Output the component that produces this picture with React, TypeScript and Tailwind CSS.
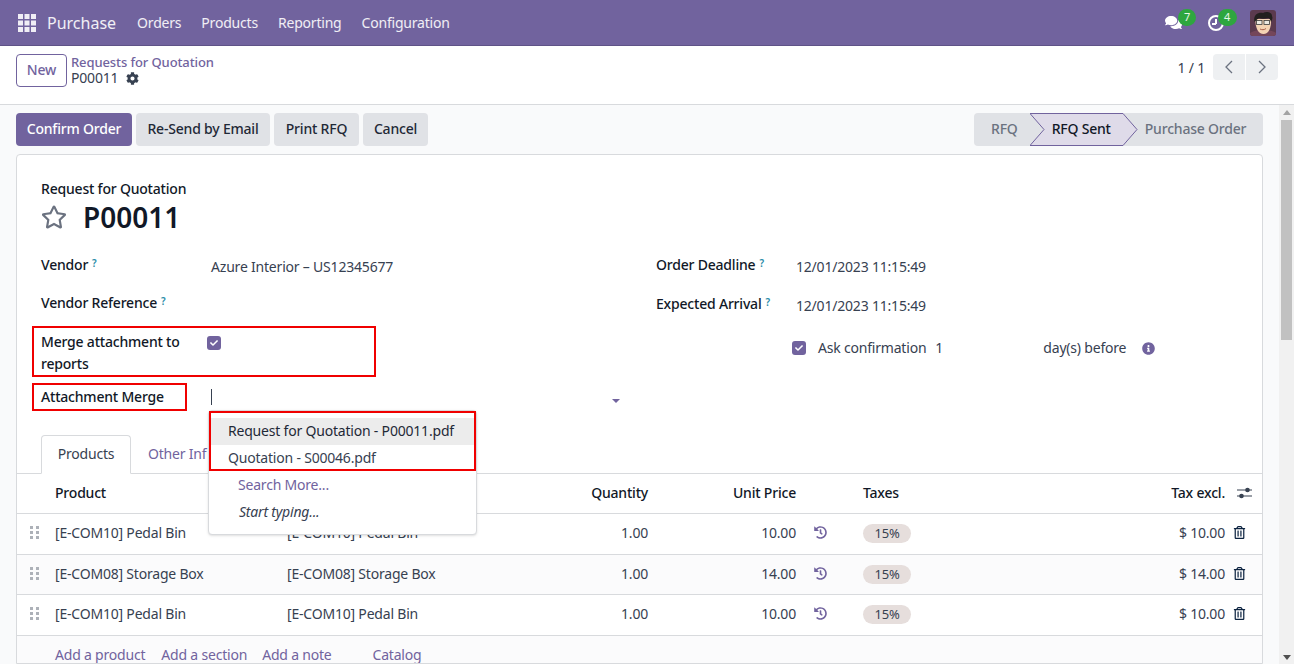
import React from "react";
import { FaCog, FaRegStar, FaHistory, FaInfoCircle, FaRegTrashAlt, FaComments, FaCheck } from "react-icons/fa";

const Grid = () => (
  <svg width="18" height="18" viewBox="0 0 18 18" fill="#f0eef5">
    {[0, 6.5, 13].map((y) => [0, 6.5, 13].map((x) => <rect key={`${x}-${y}`} x={x} y={y} width="5" height="5" />))}
  </svg>
);

const Avatar = () => (
  <svg width="26" height="26" viewBox="0 0 26 26" className="rounded-[3px]">
    <rect width="26" height="26" fill="#5b3a4e" />
    <path d="M0 26v-3c3-2 7-3 13-3s10 1 13 3v3z" fill="#74465a" />
    <path d="M5.500 9c-.5 9 3 15 8 15s8-6 7.500-15z" fill="#f4d3b4" />
    <path d="M4.500 12C3 6 7 2 13 3c3-2 9-1 9 3 1 2 0 4-1 6-.5-2-1-3-2.500-4-4 1-7 1-9.500 0-1.500 1-3 2.500-4.500 4z" fill="#23201f" />
    <rect x="6.500" y="10.500" width="5.500" height="4" fill="#ece9e2" stroke="#3a3a3a" strokeWidth="0.800" />
    <rect x="14" y="10.500" width="5.500" height="4" fill="#ece9e2" stroke="#3a3a3a" strokeWidth="0.800" />
    <path d="M10 19c1.500 1 4.500 1 6-.500" stroke="#a0523f" strokeWidth="0.900" fill="none" />
  </svg>
);

const Sliders = () => (
  <svg width="15" height="12" viewBox="0 0 15 12" fill="#374151">
    <rect x="0" y="2.500" width="15" height="1" />
    <circle cx="10.500" cy="3" r="2.300" />
    <rect x="0" y="8.500" width="15" height="1" />
    <circle cx="4.500" cy="9" r="2.300" />
  </svg>
);

const Help = () => (
  <sup className="relative -top-[3px] ml-[4px] text-[10px] font-semibold leading-none text-[#2a8ca8]">?</sup>
);

const Check = () => (
  <span className="flex h-[14px] w-[14px] items-center justify-center rounded-[3px] bg-[#71639e]">
    <FaCheck className="text-[8px] text-white" />
  </span>
);

const Label = ({ children, className = "" }: { children: React.ReactNode; className?: string }) => (
  <div className={`font-medium text-[#111827] ${className}`}>{children}</div>
);

const rows = [
  { p: "[E-COM10] Pedal Bin", q: "1.00", u: "10.00", t: "$ 10.00", h: "h-[41px] pb-[3px]", bg: "bg-white" },
  { p: "[E-COM08] Storage Box", q: "1.00", u: "14.00", t: "$ 14.00", h: "h-[40px] pb-[2px]", bg: "bg-[#fbfbfc]" },
  { p: "[E-COM10] Pedal Bin", q: "1.00", u: "10.00", t: "$ 10.00", h: "h-[41px] pb-[3px]", bg: "bg-white" },
];

const col = "grid grid-cols-[38px_232px_200px_161px_148px_67px_200px_162px_1fr] items-center";

export default function App() {
  return (
    <div className="relative flex h-[664px] w-[1294px] flex-col overflow-hidden bg-[#f9fafb] font-['Noto_Sans',sans-serif] text-[14px] tracking-[-0.2px] text-[#374151]">
      <header className="flex h-[46px] shrink-0 items-center border-b border-[#5f5387] bg-[#71639e] text-white/90">
        <span className="ml-[18px]"><Grid /></span>
        <span className="ml-[11px] text-[16px] tracking-normal">Purchase</span>
        <nav className="ml-[21px] flex gap-[20px]">
          <span>Orders</span><span>Products</span><span>Reporting</span><span>Configuration</span>
        </nav>
        <div className="ml-auto flex items-center">
          <span className="relative flex">
            <FaComments className="text-[17px] text-white" />
            <span className="absolute -top-[5px] left-[13px] flex h-[17px] w-[18px] items-center justify-center rounded-full bg-[#2ea63f] text-[11px]">7</span>
          </span>
          <span className="relative ml-[26px] flex h-[16px] w-[16px] items-center justify-center rounded-full border-[2.5px] border-white">
            <span className="absolute left-[5px] top-[2px] h-[5px] w-[1.5px] bg-white" />
            <span className="absolute left-[2px] top-[6.5px] h-[1.5px] w-[4px] bg-white" />
            <span className="absolute -top-[8px] left-[7.5px] flex h-[17px] w-[19px] items-center justify-center rounded-full bg-[#2ea63f] text-[11px]">4</span>
          </span>
          <span className="ml-[26px] mr-[18px] flex"><Avatar /></span>
        </div>
      </header>

      <div className="flex h-[59px] shrink-0 items-start border-b border-[#d8dadd] bg-white px-[16px] pt-[8px]">
        <button className="flex h-[33px] w-[51px] items-center justify-center rounded-[4px] border border-[#71639e] pb-[2px] font-medium text-[#71639e]">New</button>
        <div className="ml-[4px] flex flex-col">
          <span className="text-[13px] font-medium leading-[16px] tracking-[-0.1px] text-[#71639e]">Requests for Quotation</span>
          <span className="flex items-center gap-[8px] leading-[16px]">P00011 <FaCog className="text-[13px]" /></span>
        </div>
        <div className="ml-auto flex items-center">
          <span className="mr-[8px]">1 / 1</span>
          <div className="flex h-[26px] gap-px">
            <span className="flex w-[32px] items-center justify-center rounded-l-[4px] bg-[#eef0f2]">
              <svg width="10" height="14" viewBox="0 0 10 14" fill="none" stroke="#6b7280" strokeWidth="1.300"><path d="M8 1 2 7l6 6" /></svg>
            </span>
            <span className="flex w-[32px] items-center justify-center rounded-r-[4px] bg-[#eef0f2]">
              <svg width="10" height="14" viewBox="0 0 10 14" fill="none" stroke="#6b7280" strokeWidth="1.300"><path d="m2 1 6 6-6 6" /></svg>
            </span>
          </div>
        </div>
      </div>

      <div className="flex min-h-0 flex-1">
        <main className="flex min-w-0 flex-1 flex-col pl-[16px] pr-[16px] pt-[8px]">
          <div className="flex h-[33px] shrink-0 items-center font-medium">
            <button className="flex h-full w-[116px] items-center justify-center rounded-[4px] bg-[#71639e] pb-[2px] text-white">Confirm Order</button>
            <button className="ml-[4px] flex h-full w-[134px] items-center justify-center rounded-[4px] bg-[#e0e2e6] pb-[2px] text-[#1f2937]">Re-Send by Email</button>
            <button className="ml-[4px] flex h-full w-[85px] items-center justify-center rounded-[4px] bg-[#e0e2e6] pb-[2px] text-[#1f2937]">Print RFQ</button>
            <button className="ml-[4px] flex h-full w-[65px] items-center justify-center rounded-[4px] bg-[#e0e2e6] pb-[2px] text-[#1f2937]">Cancel</button>
            <div className="relative ml-auto flex h-full w-[289px] items-center overflow-hidden rounded-[4px] bg-[#e0e2e6] pb-[2px]">
              <span className="ml-[17px] text-[#6b7280]">RFQ</span>
              <svg className="absolute left-[56px] top-0" width="108" height="33" viewBox="0 0 108 33">
                <path d="M0 .500h93l14 16-14 16H0l14-16z" fill="#dfdbe9" stroke="#71639e" />
              </svg>
              <span className="relative ml-[34px] text-[#111827]">RFQ Sent</span>
              <span className="relative ml-[34px] text-[#6b7280]">Purchase Order</span>
            </div>
          </div>

          <section className="mt-[8px] min-h-0 flex-1 overflow-hidden rounded-t-[4px] border border-[#d8dadd] bg-white">
            <div className="px-[24px] pt-[25px]">
              <Label className="leading-[18px]">Request for Quotation</Label>
              <div className="mt-[1px] flex h-[36px] items-center">
                <FaRegStar className="text-[26px] text-[#6b7280]" />
                <span className="ml-[16px] text-[28px] font-semibold tracking-normal text-[#111827]">P00011</span>
              </div>
              <div className="mt-[19px] flex">
                <div className="w-[615px]">
                  <div className="grid h-[38px] grid-cols-[170px_1fr]"><Label>Vendor<Help /></Label><span className="pt-[2px]">Azure Interior – US12345677</span></div>
                  <div className="grid h-[39px] grid-cols-[170px_1fr]"><Label>Vendor Reference<Help /></Label></div>
                  <div className="grid h-[55px] grid-cols-[170px_1fr] leading-[22px]"><Label>Merge attachment to reports</Label><span className="-ml-[4px] pt-[5px]"><Check /></span></div>
                  <div className="grid h-[38px] grid-cols-[170px_1fr]">
                    <Label>Attachment Merge</Label>
                    <div className="relative h-[30px] w-[411px]">
                      <span className="absolute left-0 top-[3px] h-[16px] w-px bg-[#374151]" />
                      <span className="absolute right-[2px] top-[13px] border-x-[4px] border-t-[4px] border-x-transparent border-t-[#71639e]" />
                    </div>
                  </div>
                </div>
                <div className="flex-1">
                  <div className="grid h-[39px] grid-cols-[140px_1fr]"><Label>Order Deadline<Help /></Label><span className="pt-[2px]">12/01/2023 11:15:49</span></div>
                  <div className="grid h-[44px] grid-cols-[140px_1fr]"><Label>Expected Arrival<Help /></Label><span className="pt-[2px]">12/01/2023 11:15:49</span></div>
                  <div className="ml-[136px] flex items-center">
                    <Check />
                    <span className="ml-[12px]">Ask confirmation</span>
                    <span className="ml-[9px] w-[108px]">1</span>
                    <span>day(s) before</span>
                    <FaInfoCircle className="ml-[16px] mt-[1px] text-[13px] text-[#71639e]" />
                  </div>
                </div>
              </div>
            </div>

            <div className="mt-[11px] flex h-[39px] items-end border-b border-[#d8dadd] pl-[24px]">
              <span className="-mb-px flex h-[39px] w-[90px] items-center justify-center rounded-t-[4px] border border-[#d8dadd] border-b-white bg-white pb-[2px]">Products</span>
              <span className="flex h-[38px] items-center pb-[2px] pl-[17px] text-[#71639e]">Other Inf</span>
            </div>

            <div className={`${col} h-[40px] border-b border-[#d8dadd] pb-[2px] font-medium text-[#111827]`}>
              <span /><span>Product</span><span /><span className="text-right">Quantity</span><span className="text-right">Unit Price</span><span />
              <span>Taxes</span><span className="text-right">Tax excl.</span>
              <span className="flex pl-[12px]"><Sliders /></span>
            </div>
            {rows.map((r, i) => (
              <div key={i} className={`${col} ${r.h} ${r.bg} border-b border-[#d8dadd]`}>
                <span className="flex pl-[13px]">
                  <svg width="9" height="13" viewBox="0 0 9 13" fill="#adb1b8">{[0, 5, 10].map((y) => [0, 6].map((x) => <rect key={`${x}${y}`} x={x} y={y} width="3" height="3" />))}</svg>
                </span>
                <span>{r.p}</span><span>{r.p}</span>
                <span className="text-right">{r.q}</span><span className="text-right">{r.u}</span>
                <span className="pl-[18px]"><FaHistory className="text-[13px] text-[#71639e]" /></span>
                <span><span className="inline-flex h-[19px] w-[48px] items-center justify-center rounded-full bg-[#e6dedc] text-[13px]">15%</span></span>
                <span className="text-right">{r.t}</span>
                <span className="flex pl-[8px]"><FaRegTrashAlt className="text-[13px] text-[#0c2340]" /></span>
              </div>
            ))}
            <div className="flex h-[40px] items-start bg-[#fbfbfc] pl-[38px] pt-[8px] text-[#71639e]">
              <span>Add a product</span><span className="ml-[16px]">Add a section</span><span className="ml-[15px]">Add a note</span><span className="ml-[41px]">Catalog</span>
            </div>
          </section>
        </main>
        <aside className="relative flex w-[15px] shrink-0 flex-col items-center bg-[#f1f1f1]">
          <span className="mt-[5px] border-x-[4px] border-b-[5px] border-x-transparent border-b-[#a3a3a3]" />
          <span className="mt-[5px] h-[220px] w-[11px] bg-[#c1c1c1]" />
          <span className="absolute bottom-[4px] border-x-[4px] border-t-[5px] border-x-transparent border-t-[#505050]" />
        </aside>
      </div>

      <div className="absolute left-[208px] top-[410px] h-[125px] w-[269px] rounded-[4px] border border-[#d8dadd] bg-white py-[7px] shadow-sm">
        <div className="flex h-[27px] items-center bg-[#ececec] pb-[2px] pl-[19px] text-[#1f2937]">Request for Quotation - P00011.pdf</div>
        <div className="flex h-[27px] items-center pb-[2px] pl-[19px]">Quotation - S00046.pdf</div>
        <div className="flex h-[27px] items-center pb-[2px] pl-[29px] text-[#71639e]">Search More...</div>
        <div className="flex h-[27px] items-center pb-[2px] pl-[30px] italic">Start typing...</div>
      </div>
      <div className="pointer-events-none absolute left-[32px] top-[326px] h-[51px] w-[344px] border-2 border-[#f00000]" />
      <div className="pointer-events-none absolute left-[32px] top-[383px] h-[28px] w-[155px] border-2 border-[#f00000]" />
      <div className="pointer-events-none absolute left-[209px] top-[411px] h-[60px] w-[267px] border-2 border-[#f00000]" />
    </div>
  );
}
